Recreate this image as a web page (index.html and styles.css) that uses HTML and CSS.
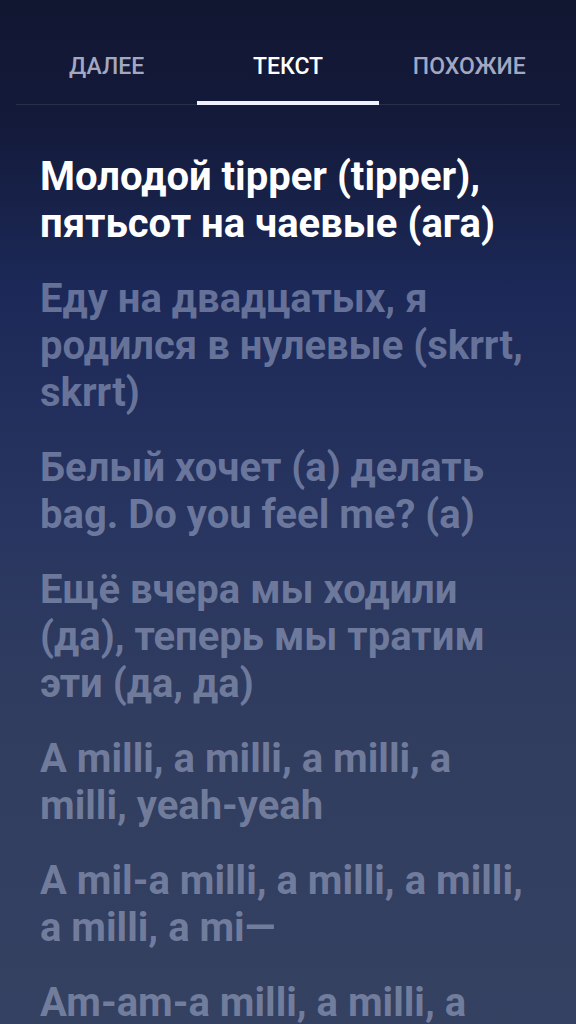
FILE: index.html
```html
<!DOCTYPE html>
<html lang="ru">
<head>
<meta charset="utf-8">
<link rel="stylesheet" href="styles.css">
</head>
<body>
<div class="screen">
  <nav class="tabs">
    <div class="tab">ДАЛЕЕ</div>
    <div class="tab active">ТЕКСТ</div>
    <div class="tab">ПОХОЖИЕ</div>
  </nav>
  <main class="lyrics">
    <p class="line current">Молодой tipper (tipper), пятьсот на чаевые (ага)</p>
    <p class="line">Еду на двадцатых, я родился в нулевые (skrrt, skrrt)</p>
    <p class="line">Белый хочет (а) делать bag. Do you feel me? (а)</p>
    <p class="line">Ещё вчера мы ходили (да), теперь мы тратим эти (да, да)</p>
    <p class="line">A milli, a milli, a milli, a milli, yeah-yeah</p>
    <p class="line">A mil-a milli, a milli, a milli, a milli, a mi—</p>
    <p class="line">Am-am-a milli, a milli, a milli, a milli</p>
  </main>
</div>
</body>
</html>
```
FILE: styles.css
```css
* { box-sizing: border-box; }
html, body { margin: 0; padding: 0; }
body {
  width: 576px;
  height: 1024px;
  overflow: hidden;
  font-family: Roboto, "Liberation Sans", sans-serif;
}
.screen {
  width: 576px;
  height: 1024px;
  overflow: hidden;
  background: linear-gradient(180deg, #111631 0px, #131a3a 120px, #1c2958 290px, #283560 520px, #313d5f 720px, #354161 1024px);
}
.tabs {
  display: flex;
  margin: 0 16px;
  padding-top: 50px;
  border-bottom: 1px solid #2a2f4a;
}
.tab {
  flex: 1;
  text-align: center;
  font-size: 23px;
  font-weight: 500;
  color: #a3a8c2;
  height: 55px;
  line-height: 34px;
  border-bottom: 4px solid transparent;
  margin-bottom: -1px;
}
.tab.active {
  color: #ffffff;
  border-bottom-color: #eef0ff;
}
.lyrics {
  padding: 48px 38px 0 40px;
}
.line {
  margin: 0 0 28px 0;
  font-size: 40px;
  font-weight: 700;
  line-height: 47px;
  color: rgba(185, 195, 225, 0.47);
}
.line.current {
  color: #ffffff;
}
```
